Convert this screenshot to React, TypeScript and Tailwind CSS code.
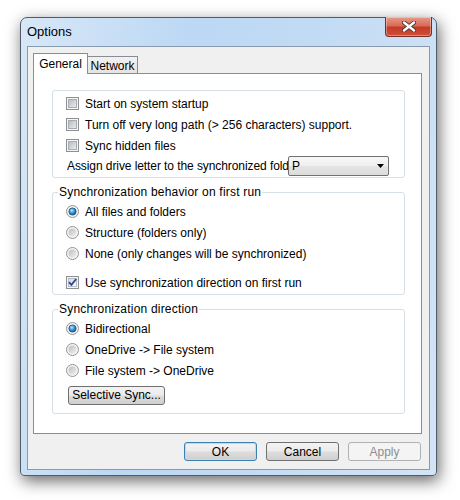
function CheckBox({ checked = false }: { checked?: boolean }) {
  return (
    <svg width="13" height="13" viewBox="0 0 13 13" className="shrink-0">
      <defs>
        <linearGradient id="cbIn" x1="0" y1="0" x2="1" y2="1">
          <stop offset="0" stopColor="#b4b8bd" />
          <stop offset="1" stopColor="#eeeeee" />
        </linearGradient>
        <linearGradient id="cbInOn" x1="0" y1="0" x2="1" y2="1">
          <stop offset="0" stopColor="#d2d8e2" />
          <stop offset="1" stopColor="#fbfbfb" />
        </linearGradient>
      </defs>
      <rect x="0.5" y="0.5" width="12" height="12" fill="#f6f6f6" stroke="#8e8f8f" />
      <rect
        x="2.5"
        y="2.5"
        width="8"
        height="8"
        fill={checked ? "url(#cbInOn)" : "url(#cbIn)"}
        stroke={checked ? "#b7bdc8" : "#a9adb3"}
      />
      {checked && (
        <path d="M3 6.2 L5.4 8.8 L10.2 3" fill="none" stroke="#2f4a8f" strokeWidth="1.9" />
      )}
    </svg>
  );
}

function Radio({ checked = false }: { checked?: boolean }) {
  return (
    <svg width="13" height="13" viewBox="0 0 13 13" className="shrink-0">
      <defs>
        <linearGradient id="rdIn" x1="0" y1="0" x2="1" y2="1">
          <stop offset="0" stopColor="#b9bdc2" />
          <stop offset="1" stopColor="#f1f1f1" />
        </linearGradient>
        <radialGradient id="rdOn" cx="0.4" cy="0.35" r="0.7">
          <stop offset="0" stopColor="#b5ecff" />
          <stop offset="0.45" stopColor="#3fa3e0" />
          <stop offset="1" stopColor="#0b4f8d" />
        </radialGradient>
      </defs>
      <circle cx="6.5" cy="6.5" r="6" fill="#f4f4f4" stroke="#939393" />
      {checked ? (
        <circle cx="6.5" cy="6.5" r="3.6" fill="url(#rdOn)" stroke="#1d4a72" strokeWidth="0.8" />
      ) : (
        <circle cx="6.5" cy="6.5" r="4" fill="url(#rdIn)" />
      )}
    </svg>
  );
}

function Row({ children }: { children: React.ReactNode }) {
  return <div className="flex h-[21px] items-center gap-[6px]">{children}</div>;
}

const btn =
  "flex h-[19px] items-center justify-center rounded-[3px] border text-[12px] leading-none";
const btnFace =
  "border-[#707070] bg-[linear-gradient(#f3f3f3_0%,#ebebeb_48%,#dddddd_52%,#cfcfcf_100%)] text-black";

export default function App() {
  return (
    <div className="h-[500px] w-[460px] bg-white pl-[20px] pt-[17px] font-['Liberation_Sans',Arial,sans-serif] text-[12px] text-black">
      <div className="relative flex h-[459px] w-[417px] flex-col rounded-t-[7px] rounded-b-[4px] border border-[#515c6a] bg-[linear-gradient(100deg,#d7e7f7_0%,#bcd8f4_35%,#c2dbf4_60%,#d3e4f6_100%)] shadow-[2px_5px_16px_rgba(0,0,0,0.6)]">
        <div className="flex h-[28px] items-center pl-[6px] text-[13px] text-black">Options</div>

        <div className="absolute right-[4px] top-[-1px] flex h-[20px] w-[47px] items-center justify-center rounded-b-[4px] border border-t-0 border-[#7b2c22] bg-[linear-gradient(#e99a8a_0%,#d96c58_45%,#c53b27_55%,#cc5038_100%)] shadow-[inset_0_0_0_1px_rgba(255,255,255,0.35)]">
          <svg width="14" height="11" viewBox="0 0 14 11">
            <path d="M2 1.5 L12 9.5 M12 1.5 L2 9.5" stroke="#4a3a38" strokeWidth="4.2" strokeLinecap="round" />
            <path d="M2 1.5 L12 9.5 M12 1.5 L2 9.5" stroke="#ffffff" strokeWidth="2.4" strokeLinecap="round" />
          </svg>
        </div>

        <div className="mx-[6px] flex h-[424px] flex-col border border-[#8a9aae] bg-[#f0f0f0] pl-[5px] pr-[7px] pt-[6px]">
          <div className="flex h-[20px] items-end">
            <div className="relative z-10 flex h-[21px] w-[55px] items-center justify-center self-start border border-b-0 border-[#898c95] bg-white pb-[1px]">
              General
            </div>
            <div className="flex h-[17px] w-[50px] items-center justify-center border border-b-0 border-l-0 border-[#898c95] bg-[linear-gradient(#f2f2f2,#e3e3e3)] pt-[1px]">
              Network
            </div>
          </div>

          <div className="flex h-[361px] flex-col border border-[#898c95] bg-white pl-[18px] pr-[16px] pt-[16px]">
            <div className="flex h-[88px] flex-col rounded-[3px] border border-[#d5dfe5] pl-[13px] pt-[2px]">
              <Row>
                <CheckBox />
                <span>Start on system startup</span>
              </Row>
              <Row>
                <CheckBox />
                <span>Turn off very long path (&gt; 256 characters) support.</span>
              </Row>
              <Row>
                <CheckBox />
                <span>Sync hidden files</span>
              </Row>
              <div className="flex h-[20px] items-center">
                <span className="w-[222px] overflow-hidden whitespace-nowrap pl-[1px] tracking-[-0.08px]">
                  Assign drive letter to the synchronized folder
                </span>
                <div className="flex h-[20px] w-[101px] items-center justify-between rounded-[2px] border border-[#707070] bg-[linear-gradient(#f7f7f7_0%,#efefef_48%,#e4e4e4_52%,#dcdcdc_100%)] pl-[3px] pr-[4px]">
                  <span>P</span>
                  <svg width="7" height="4" viewBox="0 0 7 4">
                    <path d="M0 0 H7 L3.5 4 Z" fill="#000" />
                  </svg>
                </div>
              </div>
            </div>

            <fieldset className="mt-[7px] flex h-[110px] flex-col rounded-[3px] border border-[#d5dfe5]">
              <legend className="ml-[5px] px-[1px] leading-[14px] tracking-[0.2px]">Synchronization behavior on first run</legend>
              <div className="pl-[13px] pt-[2px]">
                <Row>
                  <Radio checked />
                  <span>All files and folders</span>
                </Row>
                <Row>
                  <Radio />
                  <span>Structure (folders only)</span>
                </Row>
                <Row>
                  <Radio />
                  <span>None (only changes will be synchronized)</span>
                </Row>
                <div className="mt-[8px]">
                  <Row>
                    <CheckBox checked />
                    <span>Use synchronization direction on first run</span>
                  </Row>
                </div>
              </div>
            </fieldset>

            <fieldset className="mt-[7px] flex h-[112px] flex-col rounded-[3px] border border-[#d5dfe5]">
              <legend className="ml-[5px] px-[1px] leading-[14px] tracking-[0.2px]">Synchronization direction</legend>
              <div className="pl-[13px] pt-[2px]">
                <Row>
                  <Radio checked />
                  <span>Bidirectional</span>
                </Row>
                <Row>
                  <Radio />
                  <span>OneDrive -&gt; File system</span>
                </Row>
                <Row>
                  <Radio />
                  <span>File system -&gt; OneDrive</span>
                </Row>
                <div className={`${btn} ${btnFace} mt-[5px] ml-[2px] w-[97px] pb-[1px]`}>Selective Sync...</div>
              </div>
            </fieldset>
          </div>

          <div className="mt-[8px] flex justify-end gap-[9px] pr-[1px]">
            <div className={`${btn} w-[73px] border-[#3c7fb1] bg-[linear-gradient(#f3f3f3_0%,#ebebeb_48%,#dddddd_52%,#cfcfcf_100%)] shadow-[inset_0_0_0_1px_#aee1f8]`}>OK</div>
            <div className={`${btn} ${btnFace} w-[73px]`}>Cancel</div>
            <div className={`${btn} w-[73px] border-[#adb2b5] bg-[#f4f4f4] text-[#8d8d8d]`}>Apply</div>
          </div>
        </div>
      </div>
    </div>
  );
}
